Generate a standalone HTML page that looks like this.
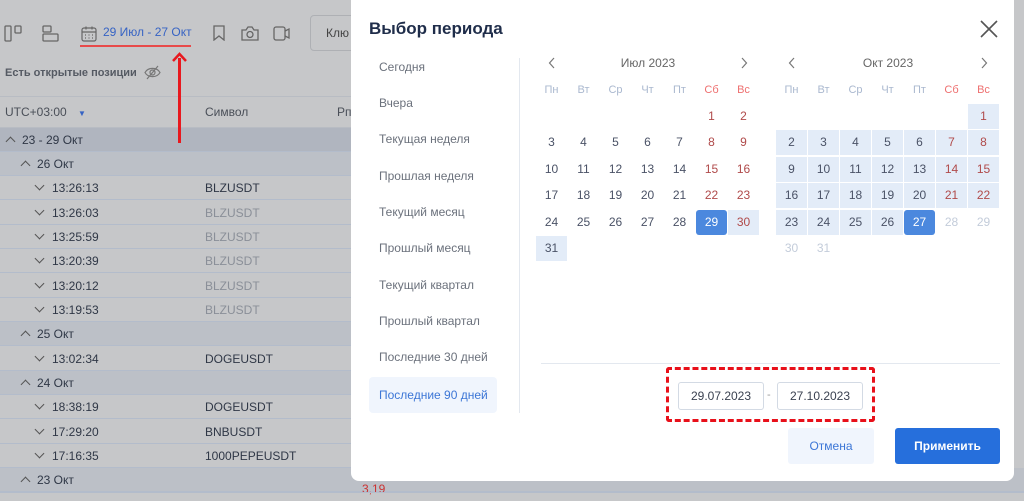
<!DOCTYPE html>
<html><head><meta charset="utf-8"><style>
*{margin:0;padding:0;box-sizing:border-box}
body{width:1024px;height:501px;overflow:hidden;background:#c6c7c9;font-family:"Liberation Sans",sans-serif;position:relative;color:#3a4150}
.a{position:absolute}
.row{position:absolute;left:0;width:360px;height:24px;border-bottom:1px solid #b3bccb;font-size:12px;line-height:24px;color:#2f3746}
.g1{background:#b0b5bf}
.g2{background:#bcc0c7}
.chev{display:inline-block;width:7px;height:7px;border-left:1.3px solid #555;border-top:1.3px solid #555;transform:rotate(45deg);margin-right:8px;vertical-align:-1px}
.chd{display:inline-block;width:7px;height:7px;border-left:1.3px solid #555;border-top:1.3px solid #555;transform:rotate(-135deg);margin-right:9px;vertical-align:3px}
.modal{position:absolute;left:351px;top:0;width:663px;height:481px;background:#fff;border-radius:0 0 8px 8px}
.preset{position:absolute;left:18px;width:128px;height:36px;font-size:12px;color:#6b717c;line-height:36px;padding-left:10px}
.c{position:absolute;width:31px;height:25px;line-height:25px;text-align:center;color:#4a5266;font-size:12px}
.h{color:#aab8cf}
.w{color:#b04a4a}
.hw{color:#ee7070}
.bg{background:#e3ecf8}
.sel{background:#4b88de;color:#fff;border-radius:3px}
.dim{color:#c3ccda}
</style></head><body>
<!-- toolbar -->
<svg class="a" style="left:4px;top:25px" width="20" height="17" viewBox="0 0 20 17" fill="none" stroke="#666" stroke-width="1.3"><rect x="1" y="1" width="6" height="15" rx="1"/><rect x="11" y="1" width="6" height="7" rx="1"/></svg>
<svg class="a" style="left:42px;top:25px" width="18" height="17" viewBox="0 0 18 17" fill="none" stroke="#666" stroke-width="1.3"><rect x="1" y="1" width="8" height="6" rx="1"/><rect x="1" y="9" width="15" height="7" rx="1"/></svg>
<svg class="a" style="left:81px;top:26px" width="16" height="16" viewBox="0 0 16 16" fill="none" stroke="#666" stroke-width="1.2"><rect x="1" y="2" width="14" height="13" rx="2"/><path d="M1 6h14M5 0.5v3M11 0.5v3"/><path d="M4 9h1M7.5 9h1M11 9h1M4 12h1M7.5 12h1M11 12h1"/></svg>
<div class="a" style="left:103px;top:25px;font-size:12px;color:#3663c4">29 Июл - 27 Окт</div>
<div class="a" style="left:80px;top:45px;width:111px;height:2px;background:#e84a4a"></div>
<svg class="a" style="left:212px;top:25px" width="14" height="16" fill="none" stroke="#666" stroke-width="1.3"><path d="M2 1h10v14l-5-4-5 4z"/></svg>
<svg class="a" style="left:241px;top:25px" width="18" height="16" fill="none" stroke="#666" stroke-width="1.3"><path d="M1 5h4l2-3h4l2 3h4v10H1z"/><circle cx="9" cy="9.5" r="3"/></svg>
<svg class="a" style="left:273px;top:26px" width="17" height="15" fill="none" stroke="#666" stroke-width="1.3"><rect x="1" y="1" width="11" height="13" rx="2"/><path d="M12 5l4-2v9l-4-2"/></svg>
<div class="a" style="left:310px;top:15px;width:60px;height:36px;border:1px solid #aeb0b4;border-radius:4px;font-size:12px;line-height:34px;padding-left:15px;color:#444">Клю</div>
<div class="a" style="left:5px;top:67px;font-size:11px;font-weight:bold;color:#555a63">Есть открытые позиции</div>
<svg class="a" style="left:144px;top:65px" width="17" height="15" fill="none" stroke="#777" stroke-width="1.2"><path d="M1 7.5C4 2 13 2 16 7.5C13 13 4 13 1 7.5z"/><circle cx="8.5" cy="7.5" r="2.5"/><path d="M3 14L14 1"/></svg>
<div class="a" style="left:0;top:96px;width:360px;height:32px;border-top:1px solid #b8bcc3;border-bottom:1px solid #b8bcc3"></div>
<div class="a" style="left:5px;top:105px;font-size:12px;color:#4a4f58">UTC+03:00 <span style="color:#3663c4;font-size:8px;margin-left:8px">▼</span></div>
<div class="a" style="left:205px;top:105px;font-size:12px;color:#4a4f58">Символ</div>
<div class="a" style="left:337px;top:105px;font-size:12px;color:#4a4f58">Рп</div>
<div class="row g1" style="top:128px;padding-left:7px"><span class="chev"></span>23 - 29 Окт</div>
<div class="row g2" style="top:152px;padding-left:22px"><span class="chev"></span>26 Окт</div>
<div class="row" style="top:176px;padding-left:36px"><span class="chd"></span>13:26:13<span class="a" style="left:205px">BLZUSDT</span></div>
<div class="row" style="top:201px;padding-left:36px"><span class="chd"></span>13:26:03<span class="a" style="left:205px;color:#8a8f98">BLZUSDT</span></div>
<div class="row" style="top:225px;padding-left:36px"><span class="chd"></span>13:25:59<span class="a" style="left:205px;color:#8a8f98">BLZUSDT</span></div>
<div class="row" style="top:249px;padding-left:36px"><span class="chd"></span>13:20:39<span class="a" style="left:205px;color:#8a8f98">BLZUSDT</span></div>
<div class="row" style="top:274px;padding-left:36px"><span class="chd"></span>13:20:12<span class="a" style="left:205px;color:#8a8f98">BLZUSDT</span></div>
<div class="row" style="top:298px;padding-left:36px"><span class="chd"></span>13:19:53<span class="a" style="left:205px;color:#8a8f98">BLZUSDT</span></div>
<div class="row g2" style="top:322px;padding-left:22px"><span class="chev"></span>25 Окт</div>
<div class="row" style="top:347px;padding-left:36px"><span class="chd"></span>13:02:34<span class="a" style="left:205px">DOGEUSDT</span></div>
<div class="row g2" style="top:371px;padding-left:22px"><span class="chev"></span>24 Окт</div>
<div class="row" style="top:395px;padding-left:36px"><span class="chd"></span>18:38:19<span class="a" style="left:205px">DOGEUSDT</span></div>
<div class="row" style="top:420px;padding-left:36px"><span class="chd"></span>17:29:20<span class="a" style="left:205px">BNBUSDT</span></div>
<div class="row" style="top:444px;padding-left:36px"><span class="chd"></span>17:16:35<span class="a" style="left:205px">1000PEPEUSDT</span></div>
<div class="row g2" style="top:468px;padding-left:22px;width:1024px"><span class="chev"></span>23 Окт</div>
<div class="a" style="left:362px;top:482px;font-size:12px;color:#c33">3,19</div>
<div class="a" style="left:0;top:492px;width:1024px;height:1px;background:#b3bccb"></div>
<div class="a" style="left:178px;top:58px;width:2.5px;height:85px;background:#e8181e;z-index:5"></div>
<svg class="a" style="left:171px;top:51px;z-index:5" width="17" height="12"><path d="M2 10L8.5 3L15 10" fill="none" stroke="#e8181e" stroke-width="2.5"/></svg>

<div class="modal">
<div class="a" style="left:18px;top:19px;font-size:17px;font-weight:bold;color:#1f2d4a">Выбор периода</div>
<svg class="a" style="left:629px;top:20px" width="18" height="18" stroke="#555" stroke-width="1.6"><path d="M1 1L17 17M17 1L1 17"/></svg>
<div class="preset" style="top:49px">Сегодня</div>
<div class="preset" style="top:85px">Вчера</div>
<div class="preset" style="top:121px">Текущая неделя</div>
<div class="preset" style="top:158px">Прошлая неделя</div>
<div class="preset" style="top:194px">Текущий месяц</div>
<div class="preset" style="top:230px">Прошлый месяц</div>
<div class="preset" style="top:267px">Текущий квартал</div>
<div class="preset" style="top:303px">Прошлый квартал</div>
<div class="preset" style="top:339px">Последние 30 дней</div>
<div class="preset" style="top:377px;color:#3c76d6;background:#f0f5fd;border-radius:4px">Последние 90 дней</div>
<div class="a" style="left:168px;top:58px;width:1px;height:355px;background:#e3e8ef"></div>
<div class="a" style="left:190px;top:363px;width:459px;height:1px;background:#e3e8ef"></div>
<div id="cals"></div>
<div class="a" style="left:315px;top:367px;width:209px;height:55px;border:3px dashed #e8101a;border-radius:3px"></div>
<div class="a" style="left:327px;top:382px;width:86px;height:28px;border:1px solid #d3dae4;border-radius:3px;font-size:12px;text-align:center;line-height:26px;color:#3a4150">29.07.2023</div>
<div class="a" style="left:416px;top:389px;font-size:11px;color:#999">-</div>
<div class="a" style="left:426px;top:382px;width:86px;height:28px;border:1px solid #d3dae4;border-radius:3px;font-size:12px;text-align:center;line-height:26px;color:#3a4150">27.10.2023</div>
<div class="a" style="left:437px;top:428px;width:86px;height:36px;background:#f0f5fd;border-radius:3px;font-size:12px;text-align:center;line-height:36px;color:#3c76d6">Отмена</div>
<div class="a" style="left:544px;top:428px;width:105px;height:36px;background:#266fdc;border-radius:3px;font-size:12px;font-weight:bold;text-align:center;line-height:36px;color:#fff">Применить</div>
</div>
<script>
var o='';
function cal(x0,title,start,days,selS,selE,extra){
 o+='<svg class="a" style="left:'+(x0+12)+'px;top:57px" width="8" height="12"><path d="M6 1L1.5 6L6 11" fill="none" stroke="#777" stroke-width="1.2"/></svg>';
 o+='<svg class="a" style="left:'+(x0+204)+'px;top:57px" width="8" height="12"><path d="M2 1L6.5 6L2 11" fill="none" stroke="#777" stroke-width="1.2"/></svg>';
 o+='<div class="a" style="left:'+(x0)+'px;width:224px;text-align:center;top:56px;font-size:12px;color:#666">'+title+'</div>';
 var hd=['Пн','Вт','Ср','Чт','Пт','Сб','Вс'];
 for(var i=0;i<7;i++)o+='<div class="c '+(i>4?'hw':'h')+'" style="left:'+(x0+i*32)+'px;top:78px;font-size:11px">'+hd[i]+'</div>';
 var pos=start;
 for(var d=1;d<=days+extra;d++){
  var col=pos%7,row=Math.floor(pos/7);
  var cls='c';var dd=d;
  if(d>days){cls+=' dim';dd=d-days+27;}
  else{ if(col>4)cls+=' w'; if(d>=selS&&d<=selE)cls+=' bg'; if(d==selS&&title[0]=='И'||d==selE&&title[0]=='О')cls+=' sel';}
  o+='<div class="'+cls+'" style="left:'+(x0+col*32)+'px;top:'+(104+row*26.4)+'px">'+dd+'</div>';
  pos++;
 }
}
cal(185,'Июл 2023',5,31,29,31,0);
cal(425,'Окт 2023',6,27,1,27,4);
document.getElementById('cals').innerHTML=o;
</script>
</body></html>
